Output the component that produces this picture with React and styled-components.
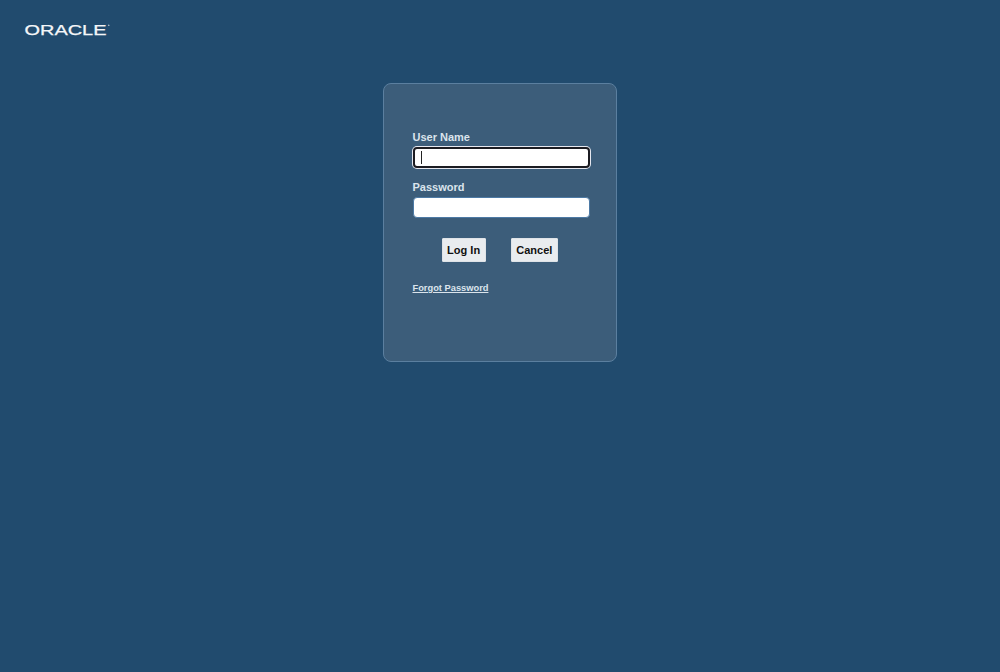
import styled, { createGlobalStyle } from 'styled-components';

const GlobalStyle = createGlobalStyle`
    html, body {
        margin: 0;
        height: 100%;
        background: #214b6e;
        font-family: "Liberation Sans", Arial, sans-serif;
    }
`;

const Page = styled.div`
    display: flex;
    flex-direction: column;
    min-height: 672px;
    background: #214b6e;
`;

const Header = styled.header`
    display: flex;
    align-items: center;
    height: 60px;
    padding-left: 24px;
`;

const Logo = styled.svg`
    display: block;
    width: 86px;
    height: 14px;
    fill: #f4f6f8;
    stroke: #f4f6f8;
    stroke-width: 0.25;
`;

const Card = styled.main`
    box-sizing: border-box;
    width: 234px;
    height: 279px;
    margin: 23px auto 0;
    padding: 46px 26px 0 28.5px;
    background: #3c5d7a;
    border: 1px solid #5b7f9f;
    border-radius: 8px;
`;

const Field = styled.div`
    display: flex;
    flex-direction: column;
    margin-bottom: 12px;
`;

const Label = styled.label`
    color: #dbe4ec;
    font-size: 11px;
    font-weight: bold;
    line-height: 14px;
    margin-bottom: 3px;
`;

const InputWrap = styled.div`
    position: relative;
    width: 177px;
    height: 21px;
`;

const Input = styled.input`
    box-sizing: border-box;
    width: 100%;
    height: 100%;
    padding: 0 7px;
    background: #fff;
    border: 1px solid #4d7aa5;
    border-radius: 4px;
    font-size: 12px;
    font-family: inherit;
    outline: none;
    caret-color: transparent;

    &:focus {
        border: 2px solid #1c1c22;
        box-shadow: 0 0 0 1px #e6e8f0;
    }
`;

const Caret = styled.span`
    position: absolute;
    left: 8px;
    top: 4px;
    width: 1px;
    height: 13px;
    background: #222;
`;

const Buttons = styled.div`
    display: flex;
    justify-content: center;
    gap: 25px;
    margin-top: 20px;
    padding-right: 3px;
`;

const Button = styled.button`
    box-sizing: border-box;
    height: 24px;
    padding: 0 4.6px;
    background: #e9ecef;
    color: #111;
    border: 1px solid #dfe3e7;
    border-radius: 1px;
    font-family: inherit;
    font-size: 11px;
    font-weight: bold;
    cursor: pointer;
`;

const ForgotLink = styled.a`
    display: inline-block;
    margin-top: 20px;
    color: #dbe4ec;
    font-size: 9.3px;
    font-weight: bold;
    line-height: 12px;
    text-decoration: underline;
`;

const App = () => {
    return (
        <Page>
            <GlobalStyle />
            <Header>
                <Logo viewBox="0 0 86 14" role="img" aria-label="Oracle">
                    <text
                        x="0.5"
                        y="12"
                        fontFamily="Liberation Sans"
                        fontSize="14"
                        textLength="82"
                        lengthAdjust="spacingAndGlyphs"
                    >ORACLE</text>
                    <circle cx="84.8" cy="2.2" r="0.5" />
                </Logo>
            </Header>
            <Card>
                <Field>
                    <Label htmlFor="username">User Name</Label>
                    <InputWrap>
                        <Input id="username" type="text" autoFocus />
                        <Caret />
                    </InputWrap>
                </Field>
                <Field>
                    <Label htmlFor="password">Password</Label>
                    <InputWrap>
                        <Input id="password" type="password" />
                    </InputWrap>
                </Field>
                <Buttons>
                    <Button type="button">Log In</Button>
                    <Button type="button">Cancel</Button>
                </Buttons>
                <ForgotLink href="#">Forgot Password</ForgotLink>
            </Card>
        </Page>
    );
};

export default App;
